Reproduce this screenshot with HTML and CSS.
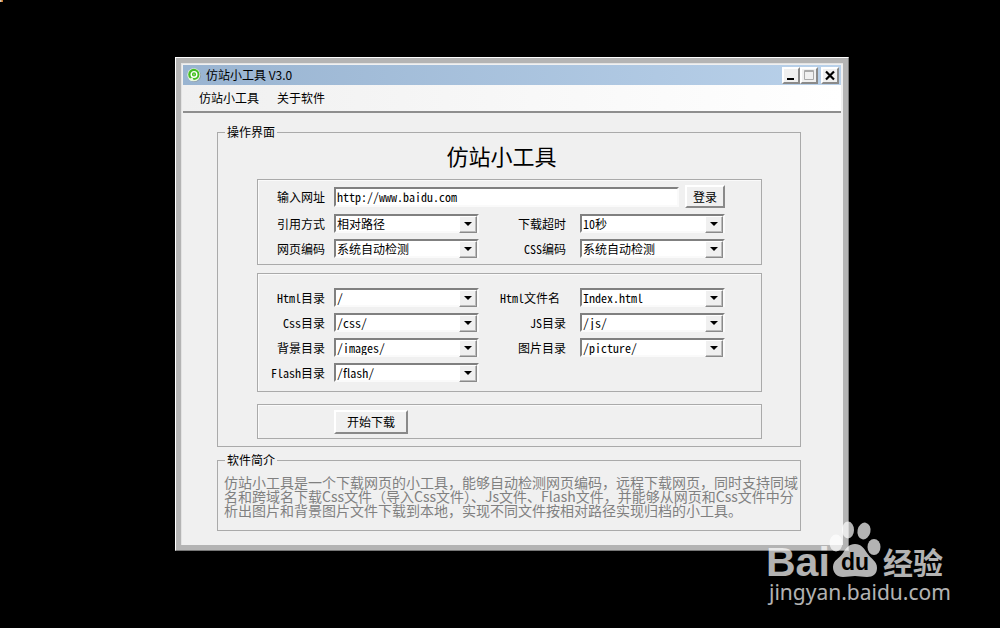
FILE: index.html
```html
<!DOCTYPE html>
<html lang="zh-CN">

<head>
  <meta charset="UTF-8">
  <meta name="viewport" content="width=device-width, initial-scale=1.0">
  <title>仿站小工具 V3.0</title>
  <link rel="stylesheet" href="styles.css">
</head>

<body>
  <div class="corner"></div>

  <div class="window">
    <div class="title-bar">
      <svg class="app-icon" viewBox="0 0 14 14" aria-hidden="true">
        <circle cx="7.5" cy="7.5" r="6.5" fill="#8d9ba8" />
        <circle cx="6.8" cy="6.8" r="6.5" fill="#e8f7df" />
        <circle cx="6.8" cy="6.4" r="5.6" fill="#45bd24" />
        <circle cx="7" cy="6.4" r="2.8" fill="none" stroke="#fff" stroke-width="1.4" />
        <circle cx="7" cy="6.4" r="1" fill="#8be06a" />
        <path d="M2 11l3.5-1.5 1.5 3.5-3 0z" fill="#e8f7df" />
      </svg>
      <span class="title-text">仿站小工具 V3.0</span>
      <div class="window-buttons">
        <button type="button" aria-label="最小化">
          <svg viewBox="0 0 14 13"><path d="M3 10h7" stroke="#000" stroke-width="2" /></svg>
        </button>
        <button type="button" aria-label="最大化" disabled>
          <svg viewBox="0 0 14 13"><path d="M2.5 1.5h9v9h-9zM2.5 2.5h9" fill="none" stroke="#aaa" /></svg>
        </button>
        <button type="button" class="close" aria-label="关闭">
          <svg viewBox="0 0 14 13"><path d="M3 2.500l8 8M11 2.500l-8 8" stroke="#000" stroke-width="2.200" /></svg>
        </button>
      </div>
    </div>

    <nav class="menu">
      <a href="#">仿站小工具</a>
      <a href="#">关于软件</a>
    </nav>

    <main>
      <fieldset class="main-panel">
        <legend>操作界面</legend>
        <h1>仿站小工具</h1>

        <form>
          <div class="group site">
            <label for="url">输入网址</label>
            <div class="url-row">
              <input type="text" id="url" value="http://www.baidu.com">
              <button type="button" class="login">登录</button>
            </div>

            <label for="path-mode">引用方式</label>
            <span class="combo"><select id="path-mode"><option>相对路径</option></select></span>
            <label for="timeout" class="second">下载超时</label>
            <span class="combo"><select id="timeout"><option>10秒</option></select></span>

            <label for="page-charset">网页编码</label>
            <span class="combo"><select id="page-charset"><option>系统自动检测</option></select></span>
            <label for="css-charset" class="second">CSS编码</label>
            <span class="combo"><select id="css-charset"><option>系统自动检测</option></select></span>
          </div>

          <div class="group folders">
            <label for="html-dir">Html目录</label>
            <span class="combo"><select id="html-dir"><option>/</option></select></span>
            <label for="html-name" class="second">Html文件名&nbsp;</label>
            <span class="combo"><select id="html-name"><option>Index.html</option></select></span>

            <label for="css-dir">Css目录</label>
            <span class="combo"><select id="css-dir"><option>/css/</option></select></span>
            <label for="js-dir" class="second">JS目录</label>
            <span class="combo"><select id="js-dir"><option>/js/</option></select></span>

            <label for="bg-dir">背景目录</label>
            <span class="combo"><select id="bg-dir"><option>/images/</option></select></span>
            <label for="img-dir" class="second">图片目录</label>
            <span class="combo"><select id="img-dir"><option>/picture/</option></select></span>

            <label for="flash-dir">Flash目录</label>
            <span class="combo"><select id="flash-dir"><option>/flash/</option></select></span>
          </div>

          <div class="group actions">
            <button type="button" class="start">开始下载</button>
          </div>
        </form>
      </fieldset>

      <fieldset class="about">
        <legend>软件简介</legend>
        <p>仿站小工具是一个下载网页的小工具，能够自动检测网页编码，远程下载网页，同时支持同域<br>名和跨域名下载Css文件（导入Css文件）、Js文件、Flash文件，并能够从网页和Css文件中分<br>析出图片和背景图片文件下载到本地，实现不同文件按相对路径实现归档的小工具。</p>
      </fieldset>
    </main>
  </div>

  <svg class="watermark" viewBox="0 0 200 100" role="img" aria-label="Baidu 经验">
    <g fill="#fff">
      <text x="6" y="66" class="mark-bai">Bai</text>
      <ellipse cx="76" cy="33" rx="6.5" ry="8.5" />
      <ellipse cx="88" cy="20" rx="6" ry="8.5" />
      <ellipse cx="104" cy="21" rx="6.5" ry="8.5" transform="rotate(12 104 21)" />
      <ellipse cx="114" cy="37" rx="6.5" ry="8" />
      <path d="M95 34c6 0 9 4 12 9 4 6 10 8 10 15 0 6-4 9-10 9-5 0-8-1-12-1s-7 1-12 1c-6 0-10-4-10-10 0-7 6-8 10-14 3-5 6-9 12-9z" />
      <text x="123" y="64" class="mark-cn">经验</text>
      <text x="9" y="90" class="mark-url">jingyan.baidu.com</text>
    </g>
    <text x="81" y="60" class="mark-du">du</text>
  </svg>
</body>

</html>
```

FILE: styles.css
```css
* {
  box-sizing: border-box;
}

body {
  margin: 0;
  padding: 57px 15.1% 0 17.5%;
  background: #000;
  color: #000;
  font-family: "Noto Sans CJK SC", sans-serif;
  font-size: 12px;
  line-height: 14px;
}

button,
input,
select {
  font: inherit;
  font-feature-settings: "hwid";
  color: #000;
}

.corner {
  position: absolute;
  top: 0;
  left: 0;
  width: 3px;
  height: 2px;
  background: linear-gradient(to right, #ddd, #c60);
}

/* window frame */
.window {
  padding: 7px 7px 5px;
  background: #f0f0f0;
  border: 1px solid;
  border-color: #fff #777 #777 #fff;
  box-shadow: inset 0 0 0 5px #b4b4b4, inset 6px 6px #e3e3e3;
}

.title-bar {
  display: flex;
  align-items: center;
  height: 20px;
  padding: 0 2px 0 4px;
  background: linear-gradient(to right, #99b4d1, #b9d1ea);
}

.app-icon {
  width: 14px;
  height: 14px;
  margin-right: 5px;
}

.title-text {
  flex: 1;
}

.window-buttons {
  display: flex;
}

.window-buttons button {
  width: 18px;
  height: 17px;
  padding: 0;
}

.window-buttons svg {
  display: block;
  width: 14px;
  height: 13px;
}

.window-buttons .close {
  margin-left: 3px;
}

button {
  background: #f0f0f0;
  border: 2px solid;
  border-color: #fff #8a8a8a #8a8a8a #fff;
}

.menu {
  display: flex;
  gap: 18px;
  height: 28px;
  padding: 6px 16px;
  background: linear-gradient(to right, #f0f0f0, #fff);
  border-bottom: 2px solid #8e8e8e;
}

.menu a {
  color: #000;
  text-decoration: none;
}

main {
  padding: 12px 40px 14px 34px;
}

/* panels */
fieldset {
  min-width: 0;
  margin: 0;
  border: 1px solid #aaa;
}

legend {
  padding: 0 2px;
}

.main-panel {
  padding: 0 38px 7px 39px;
}

.main-panel > legend {
  margin-left: -32px;
}

h1 {
  margin: 0 0 8px;
  padding-right: 16px;
  font-size: 22px;
  font-weight: normal;
  line-height: 32px;
  text-align: center;
}

.group {
  display: grid;
  grid-template-columns: 76px 1fr 101px 1fr;
  align-items: center;
  row-gap: 6px;
  padding-right: 36px;
  border: 1px solid #aaa;
  box-shadow: inset 1px 1px #fafafa;
}

.group label {
  padding-right: 9px;
  text-align: right;
  font-feature-settings: "hwid";
  white-space: nowrap;
}

.group .second {
  padding-right: 14px;
}

.site {
  padding-top: 5px;
  padding-bottom: 6px;
  margin-bottom: 8px;
}

.folders {
  padding-top: 14px;
  padding-bottom: 9px;
  margin-bottom: 12px;
}

.url-row {
  grid-column: 2 / -1;
  display: flex;
  align-items: center;
  gap: 6px;
}

input,
.combo {
  background: #fff;
  border: 2px solid;
  border-color: #808080 #fafafa #fafafa #808080;
}

input {
  flex: 1;
  min-width: 0;
  height: 20px;
  padding: 0 1px;
}

.login {
  width: 40px;
  height: 23px;
  padding: 0;
}

.combo {
  position: relative;
  display: block;
  height: 19px;
}

.combo select {
  display: block;
  width: 100%;
  height: 15px;
  padding: 0 1px;
  appearance: none;
  background: none;
  border: 0;
  line-height: 15px;
}

/* drop-down button and its arrow */
.combo::before {
  content: "";
  position: absolute;
  top: 0;
  right: 0;
  width: 16px;
  height: 15px;
  background: #f0f0f0;
  border: 1px solid;
  border-color: #fff #8a8a8a #8a8a8a #fff;
  box-shadow: inset -1px -1px #bbb;
  pointer-events: none;
}

.combo::after {
  content: "";
  position: absolute;
  top: 6px;
  right: 5px;
  border: 4px solid transparent;
  border-top-color: #000;
  border-bottom: 0;
  pointer-events: none;
}

.actions {
  padding: 5px 36px 4px 0;
}

.start {
  grid-column: 2;
  width: 74px;
  height: 24px;
  padding: 0;
}

.about {
  margin-top: 6px;
  padding: 0 0 13px 6px;
}

.about legend {
  margin-left: 1px;
}

.about p {
  margin: 8px 0 0;
  color: #808080;
  font-size: 14px;
  line-height: 14px;
  white-space: nowrap;
}

/* site mark */
.watermark {
  position: absolute;
  right: 40px;
  top: 510px;
  width: 200px;
  height: 100px;
  opacity: 0.7;
}

.mark-bai {
  font: bold 41px "Liberation Sans", sans-serif;
}

.mark-cn {
  font: bold 30px "Noto Sans CJK SC", sans-serif;
}

.mark-url {
  font: 21px "Noto Sans", sans-serif;
}

.mark-du {
  font: bold 23px "Liberation Sans", sans-serif;
  fill: #000;
}
```
